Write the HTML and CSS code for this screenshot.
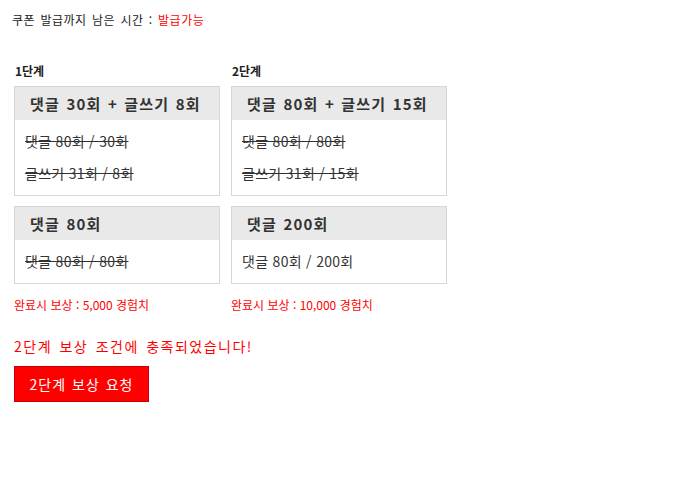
FILE: index.html
```html
<!DOCTYPE html>
<html lang="ko">
<head>
<meta charset="utf-8">
<link rel="stylesheet" href="styles.css">
</head>
<body>
<div class="page">
  <p class="timer">쿠폰 발급까지 남은 시간 : <span class="red">발급가능</span></p>
  <div class="stages">
    <div class="stage stage-1">
      <div class="stage-title">1단계</div>
      <div class="box">
        <div class="box-head">댓글 30회 + 글쓰기 8회</div>
        <div class="box-body">
          <div class="line done">댓글 80회 / 30회</div>
          <div class="line done">글쓰기 31회 / 8회</div>
        </div>
      </div>
      <div class="box">
        <div class="box-head">댓글 80회</div>
        <div class="box-body">
          <div class="line done">댓글 80회 / 80회</div>
        </div>
      </div>
      <p class="reward">완료시 보상 : 5,000 경험치</p>
    </div>
    <div class="stage stage-2">
      <div class="stage-title">2단계</div>
      <div class="box">
        <div class="box-head">댓글 80회 + 글쓰기 15회</div>
        <div class="box-body">
          <div class="line done">댓글 80회 / 80회</div>
          <div class="line done">글쓰기 31회 / 15회</div>
        </div>
      </div>
      <div class="box">
        <div class="box-head">댓글 200회</div>
        <div class="box-body">
          <div class="line">댓글 80회 / 200회</div>
        </div>
      </div>
      <p class="reward">완료시 보상 : 10,000 경험치</p>
    </div>
  </div>
  <p class="notice">2단계 보상 조건에 충족되었습니다!</p>
  <button class="request">2단계 보상 요청</button>
</div>
</body>
</html>
```
FILE: styles.css
```css
html, body {
  margin: 0;
  padding: 0;
  background: #fff;
}
body {
  font-family: "Noto Sans CJK KR", "Noto Sans", sans-serif;
  color: #222;
}
.page {
  padding: 0 0 0 14px;
}
.timer {
  margin: 0 0 0 -2px;
  padding-top: 11px;
  height: 18px;
  line-height: 18px;
  font-size: 12px;
  letter-spacing: 0.5px;
  word-spacing: 1.5px;
}
.red {
  color: #f00;
}
.stages {
  display: flex;
  gap: 11px;
  margin-top: 33px;
}
.stage-1 {
  width: 206px;
}
.stage-2 {
  width: 216px;
}
.stage-title {
  font-size: 12px;
  font-weight: bold;
  height: 18px;
  line-height: 18px;
  margin-left: 1px;
  margin-bottom: 6px;
}
.box {
  border: 1px solid #d6d6d6;
  margin-bottom: 10px;
}
.box-head {
  background: #e9e9e9;
  height: 33px;
  line-height: 33px;
  padding-left: 15px;
  font-size: 15px;
  font-weight: bold;
  color: #333;
  letter-spacing: 1.2px;
  word-spacing: 1px;
  white-space: nowrap;
}
.box-body {
  padding: 5px 10px 6px;
}
.line {
  height: 32px;
  line-height: 32px;
  font-size: 14px;
  color: #333;
  letter-spacing: 0.3px;
  white-space: nowrap;
}
.done {
  text-decoration: line-through;
}
.reward {
  margin: 0;
  padding-top: 2px;
  font-size: 12px;
  line-height: 18px;
  color: #f00;
}
.notice {
  margin: 22px 0 0;
  font-size: 14px;
  line-height: 20px;
  color: #f00;
  letter-spacing: 1.5px;
  word-spacing: 2px;
}
.request {
  display: block;
  margin-top: 10px;
  width: 135px;
  height: 36px;
  background: #f00;
  border: 1px solid #c00;
  color: #fff;
  font-family: "Noto Sans CJK KR", "Noto Sans", sans-serif;
  font-size: 14px;
  letter-spacing: 1px;
  word-spacing: 1px;
  padding: 0;
  cursor: pointer;
}
```
